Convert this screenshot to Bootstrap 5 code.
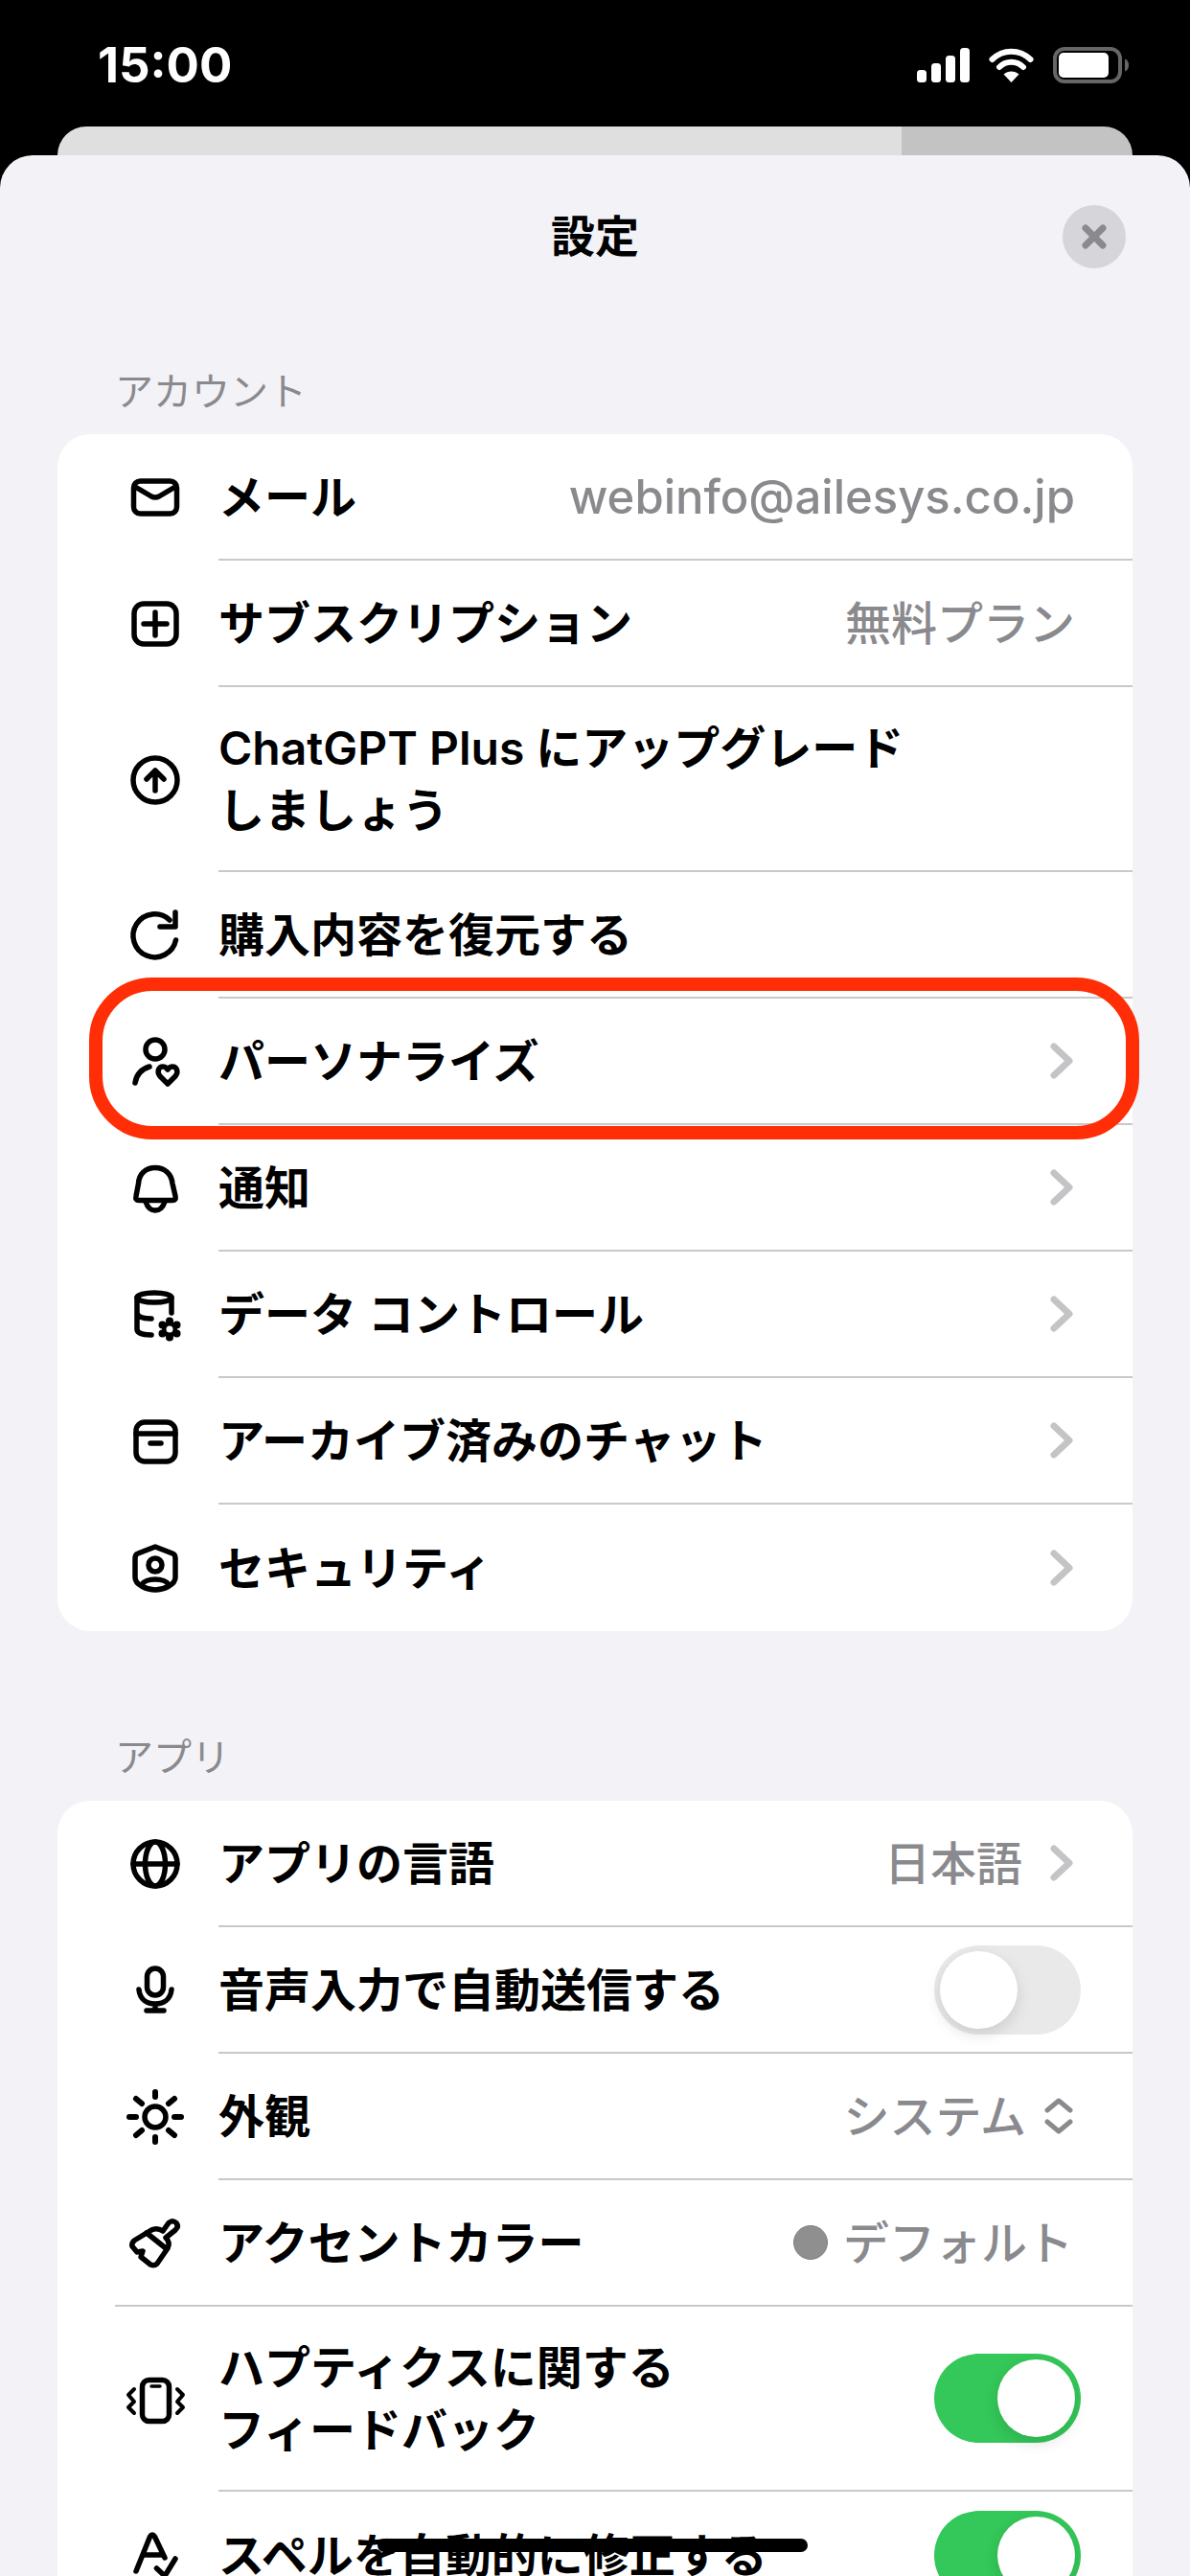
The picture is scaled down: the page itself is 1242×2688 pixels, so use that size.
<!DOCTYPE html>
<html lang="ja">
  <head>
    <meta charset="UTF-8" />
    <meta name="viewport" content="width=device-width, initial-scale=1.0" />
    <title>設定</title>
    <link
      href="https://cdn.jsdelivr.net/npm/bootstrap@5.3.2/dist/css/bootstrap.min.css"
      rel="stylesheet"
    />
    <style>
      html,
      body {
        height: 2688px;
        overflow: hidden;
      }
      body {
        background: #000;
        font-family: Inter, "Noto Sans CJK JP", sans-serif;
        color: #000;
      }
      .phone {
        width: 1242px;
        height: 2688px;
        overflow: hidden;
      }
      .status-bar {
        height: 132px;
        padding: 42px 64px 0 102px;
      }
      .clock {
        font-size: 51px;
        line-height: 52px;
        font-weight: 700;
        color: #fff;
      }
      .status-icons {
        gap: 20px;
        padding-top: 7px;
      }
      .back-sheet {
        height: 30px;
        margin: 0 60px 0 60px;
        border-radius: 30px 30px 0 0;
        overflow: hidden;
      }
      .back-left {
        width: 881px;
        background: #dfdfdf;
      }
      .back-right {
        background: #c3c3c3;
      }
      .sheet {
        height: 2526px;
        background: #f2f2f7;
        border-radius: 34px 34px 0 0;
        padding-top: 52px;
      }
      .sheet-head {
        height: 66px;
        padding: 0 67px;
      }
      .head-space {
        width: 66px;
      }
      .sheet-title {
        font-size: 46px;
        font-weight: 700;
        margin: 0;
        line-height: 60px;
        padding-bottom: 3px;
      }
      .close-btn {
        width: 66px;
        height: 66px;
        border-radius: 50%;
        background: #d5d5da;
      }
      .group-label {
        font-size: 40px;
        line-height: 48px;
        color: #8a8a8e;
        margin: 105px 0 20px 120px;
      }
      .group-label.second {
        margin-top: 108px;
        margin-bottom: 21px;
      }
      .set-group {
        --bs-list-group-border-radius: 34px;
        margin: 0 60px;
      }
      .set-item.list-group-item {
        padding: 0 0 0 60px;
        border: 0;
        height: 132px;
        background: #fff;
        color: #000;
      }
      .set-item.tall.list-group-item {
        height: 193px;
      }
      .set-icon {
        width: 84px;
        height: 84px;
        margin-right: 24px;
        flex-shrink: 0;
      }
      .set-icon svg {
        display: block;
        fill: none;
        stroke: #000;
        stroke-width: 5.5;
        stroke-linecap: round;
        stroke-linejoin: round;
      }
      .set-body {
        height: 100%;
        min-width: 0;
        padding-right: 62px;
        border-bottom: 2px solid #c9c9cb;
      }
      .set-item:last-child .set-body {
        border-bottom: 0;
      }
      /* this separator runs under the icon too */
      .set-item.wide-sep::after {
        content: "";
        position: absolute;
        left: 60px;
        right: 0;
        bottom: 0;
        height: 2px;
        background: #c9c9cb;
      }
      .set-text {
        font-size: 48px;
        line-height: 65px;
        font-weight: 600;
      }
      .set-val {
        font-size: 48px;
        line-height: 65px;
        font-weight: 500;
        color: #8a8a8e;
      }
      .val-email {
        font-size: 49px;
        margin-right: -2px;
      }
      .val-plan {
        margin-right: -2px;
      }
      .val-gap {
        gap: 16px;
      }
      .val-gap-sm {
        gap: 19px;
      }
      .val-gap-lg {
        gap: 29px;
      }
      .accent-dot {
        width: 36px;
        height: 36px;
        border-radius: 50%;
        background: #8f8f8f;
        border: 1px solid #7f7f7f;
      }
      .switch-track {
        width: 153px;
        height: 93px;
        border-radius: 47px;
        padding: 6px;
        margin-right: -8px;
      }
      .switch-track.off {
        background: #e9e9ea;
      }
      .switch-track.on {
        background: #34c759;
        padding-left: 66px;
      }
      .switch-knob {
        width: 81px;
        height: 81px;
        border-radius: 50%;
        background: #fff;
        box-shadow: 0 6px 16px rgba(0, 0, 0, 0.12);
      }
      .red-ring {
        position: absolute;
        left: 93px;
        top: 1020px;
        width: 1096px;
        height: 169px;
        border: 14px solid #ff2e06;
        border-radius: 66px;
      }
      .home-bar {
        position: absolute;
        left: 394px;
        top: 2649px;
        width: 449px;
        height: 14px;
        border-radius: 7px;
        background: #000;
      }
    </style>
  </head>
  <body>
    <div class="phone position-relative">
      <!-- status bar -->
      <div class="status-bar d-flex justify-content-between align-items-start">
        <div class="clock">15:00</div>
        <div class="status-icons d-flex align-items-center">
          <svg width="55" height="36" viewBox="0 0 55 36" fill="#fff">
            <rect x="0" y="23" width="10" height="13" rx="3.5" />
            <rect x="15" y="16" width="10" height="20" rx="3.5" />
            <rect x="30" y="8" width="10" height="28" rx="3.5" />
            <rect x="45" y="0" width="10" height="36" rx="3.5" />
          </svg>
          <svg width="47" height="36" viewBox="0 0 47 36">
            <path
              d="M3.5 12C15 1 32 1 43.5 12M11 20C18 13 29 13 36 20"
              fill="none"
              stroke="#fff"
              stroke-width="6"
              stroke-linecap="round"
            />
            <path d="M23.5 36L15.5 27.500C20 23.500 27 23.500 31.500 27.500Z" fill="#fff" />
          </svg>
          <svg width="79" height="38" viewBox="0 0 79 38">
            <rect x="2" y="2" width="68" height="34" rx="10" fill="none" stroke="#666" stroke-width="4" />
            <rect x="6" y="6" width="52" height="26" rx="5" fill="#fff" />
            <path d="M75 12.500C78 13.500 79 16 79 19C79 22 78 24.500 75 25.500Z" fill="#666" />
          </svg>
        </div>
      </div>

      <div class="back-sheet d-flex">
        <div class="back-left"></div>
        <div class="back-right flex-grow-1"></div>
      </div>

      <div class="sheet">
        <div class="sheet-head d-flex justify-content-between align-items-center">
          <div class="head-space"></div>
          <h1 class="sheet-title">設定</h1>
          <div class="close-btn d-flex align-items-center justify-content-center">
            <svg width="34" height="34" viewBox="0 0 34 34">
              <path d="M8 8L26 26M26 8L8 26" stroke="#8a8a8e" stroke-width="7" stroke-linecap="round" />
            </svg>
          </div>
        </div>

        <div class="group-label">アカウント</div>
        <div class="list-group set-group">
          <div class="list-group-item set-item d-flex align-items-center">
            <div class="set-icon">
              <svg width="84" height="84" viewBox="0 0 84 84">
                <rect x="19.500" y="25" width="45" height="34" rx="7" />
                <path d="M21 31L38 41Q42 43 46 41L63 31" />
              </svg>
            </div>
            <div class="set-body flex-grow-1 d-flex align-items-center justify-content-between">
              <span class="set-text">メール</span>
              <span class="set-val val-email">webinfo@ailesys.co.jp</span>
            </div>
          </div>
          <div class="list-group-item set-item d-flex align-items-center">
            <div class="set-icon">
              <svg width="84" height="84" viewBox="0 0 84 84">
                <rect x="20" y="21" width="44" height="42" rx="10" />
                <path d="M30 42H54M42 30V54" />
              </svg>
            </div>
            <div class="set-body flex-grow-1 d-flex align-items-center justify-content-between">
              <span class="set-text">サブスクリプション</span>
              <span class="set-val val-plan">無料プラン</span>
            </div>
          </div>
          <div class="list-group-item set-item tall d-flex align-items-center">
            <div class="set-icon">
              <svg width="84" height="84" viewBox="0 0 84 84">
                <circle cx="42" cy="42" r="23" />
                <path d="M42 53V32M33 41L42 32L51 41" />
              </svg>
            </div>
            <div class="set-body flex-grow-1 d-flex align-items-center">
              <span class="set-text">ChatGPT Plus にアップグレード<br />しましょう</span>
            </div>
          </div>
          <div class="list-group-item set-item d-flex align-items-center">
            <div class="set-icon">
              <svg width="84" height="84" viewBox="0 0 84 84">
                <path d="M63.500 47A22.500 22.500 0 1 1 57 26" />
                <path d="M63 18V33H47" />
              </svg>
            </div>
            <div class="set-body flex-grow-1 d-flex align-items-center">
              <span class="set-text">購入内容を復元する</span>
            </div>
          </div>
          <div class="list-group-item set-item d-flex align-items-center">
            <div class="set-icon">
              <svg width="84" height="84" viewBox="0 0 84 84">
                <circle cx="42" cy="29" r="10" />
                <path d="M21 64Q23 51 36 47" />
                <path d="M55 65L47 57C43 52 46 47 50 47C53 47 54 49 55 50C56 49 57 47 60 47C64 47 67 52 63 57Z" />
              </svg>
            </div>
            <div class="set-body flex-grow-1 d-flex align-items-center justify-content-between">
              <span class="set-text">パーソナライズ</span>
              <svg width="24" height="38" viewBox="0 0 24 38">
                <path d="M4 4L20 19L4 34" fill="none" stroke="#c4c4c6" stroke-width="7" stroke-linecap="round" stroke-linejoin="round" />
              </svg>
            </div>
          </div>
          <div class="list-group-item set-item d-flex align-items-center">
            <div class="set-icon">
              <svg width="84" height="84" viewBox="0 0 84 84">
                <path d="M42 20.500C32 20.500 25 27 24.500 37L22 50Q21 54.500 25 54.500H60Q64 54.500 63 50L60 37C59 27 52 20.500 42 20.500Z" />
                <path d="M32 56C34 62 37 65 42 65C47 65 50 62 52 56" />
              </svg>
            </div>
            <div class="set-body flex-grow-1 d-flex align-items-center justify-content-between">
              <span class="set-text">通知</span>
              <svg width="24" height="38" viewBox="0 0 24 38">
                <path d="M4 4L20 19L4 34" fill="none" stroke="#c4c4c6" stroke-width="7" stroke-linecap="round" stroke-linejoin="round" />
              </svg>
            </div>
          </div>
          <div class="list-group-item set-item d-flex align-items-center">
            <div class="set-icon">
              <svg width="84" height="84" viewBox="0 0 84 84">
                <ellipse cx="41" cy="24" rx="18" ry="5" />
                <path d="M23 24V57C23 62 32 63 38 63M23 40C24 45 32 46 38 46M59 24V40" />
                <g fill="#000" stroke="none">
                  <circle cx="57" cy="57" r="8" />
                  <circle cx="57" cy="48.500" r="4" />
                  <circle cx="57" cy="65.500" r="4" />
                  <circle cx="49.500" cy="52.500" r="4" />
                  <circle cx="64.500" cy="52.500" r="4" />
                  <circle cx="49.500" cy="61.500" r="4" />
                  <circle cx="64.500" cy="61.500" r="4" />
                  <circle cx="57" cy="57" r="3.500" fill="#fff" />
                </g>
              </svg>
            </div>
            <div class="set-body flex-grow-1 d-flex align-items-center justify-content-between">
              <span class="set-text">データ コントロール</span>
              <svg width="24" height="38" viewBox="0 0 24 38">
                <path d="M4 4L20 19L4 34" fill="none" stroke="#c4c4c6" stroke-width="7" stroke-linecap="round" stroke-linejoin="round" />
              </svg>
            </div>
          </div>
          <div class="list-group-item set-item d-flex align-items-center">
            <div class="set-icon">
              <svg width="84" height="84" viewBox="0 0 84 84">
                <rect x="22" y="22" width="41" height="41" rx="9" />
                <path d="M22 34H63M37 44H48" />
              </svg>
            </div>
            <div class="set-body flex-grow-1 d-flex align-items-center justify-content-between">
              <span class="set-text">アーカイブ済みのチャット</span>
              <svg width="24" height="38" viewBox="0 0 24 38">
                <path d="M4 4L20 19L4 34" fill="none" stroke="#c4c4c6" stroke-width="7" stroke-linecap="round" stroke-linejoin="round" />
              </svg>
            </div>
          </div>
          <div class="list-group-item set-item d-flex align-items-center">
            <div class="set-icon">
              <svg width="84" height="84" viewBox="0 0 84 84">
                <path d="M42 20L60 27Q63 28 63 32V52C63 60 50 65 42 65C34 65 21 60 21 52V32Q21 28 24 27Z" />
                <circle cx="42" cy="39" r="7" />
                <path d="M28 60C31 52 53 52 56 60" />
              </svg>
            </div>
            <div class="set-body flex-grow-1 d-flex align-items-center justify-content-between">
              <span class="set-text">セキュリティ</span>
              <svg width="24" height="38" viewBox="0 0 24 38">
                <path d="M4 4L20 19L4 34" fill="none" stroke="#c4c4c6" stroke-width="7" stroke-linecap="round" stroke-linejoin="round" />
              </svg>
            </div>
          </div>
        </div>

        <div class="group-label second">アプリ</div>
        <div class="list-group set-group">
          <div class="list-group-item set-item d-flex align-items-center">
            <div class="set-icon">
              <svg width="84" height="84" viewBox="0 0 84 84">
                <circle cx="42" cy="42" r="23" />
                <ellipse cx="42" cy="42" rx="10.500" ry="23" />
                <path d="M19 42H65" />
              </svg>
            </div>
            <div class="set-body flex-grow-1 d-flex align-items-center justify-content-between">
              <span class="set-text">アプリの言語</span>
              <span class="d-flex align-items-center val-gap-lg">
                <span class="set-val">日本語</span>
                <svg width="24" height="38" viewBox="0 0 24 38">
                  <path d="M4 4L20 19L4 34" fill="none" stroke="#c4c4c6" stroke-width="7" stroke-linecap="round" stroke-linejoin="round" />
                </svg>
              </span>
            </div>
          </div>
          <div class="list-group-item set-item d-flex align-items-center">
            <div class="set-icon">
              <svg width="84" height="84" viewBox="0 0 84 84">
                <rect x="33.500" y="19" width="17" height="28" rx="8.500" />
                <path d="M25 41C26 52 34 56 42 56C50 56 58 52 59 41M42 56V62M33 63H51" />
              </svg>
            </div>
            <div class="set-body flex-grow-1 d-flex align-items-center justify-content-between">
              <span class="set-text">音声入力で自動送信する</span>
              <div class="switch-track off"><div class="switch-knob"></div></div>
            </div>
          </div>
          <div class="list-group-item set-item d-flex align-items-center">
            <div class="set-icon">
              <svg width="84" height="84" viewBox="0 0 84 84">
                <circle cx="42" cy="42" r="11" />
                <path stroke-width="6" d="M42 16V21M42 63V68M15 42H22M62 42H69M22 23L28 28M62 23L56 28M22 61L28 56M62 61L56 56" />
              </svg>
            </div>
            <div class="set-body flex-grow-1 d-flex align-items-center justify-content-between">
              <span class="set-text">外観</span>
              <span class="d-flex align-items-center val-gap-sm">
                <span class="set-val">システム</span>
                <svg width="30" height="40" viewBox="0 0 30 40">
                  <path d="M3 14L15 4L27 14M3 26L15 36L27 26" fill="none" stroke="#8a8a8e" stroke-width="5" stroke-linecap="round" stroke-linejoin="round" />
                </svg>
              </span>
            </div>
          </div>
          <div class="list-group-item set-item wide-sep d-flex align-items-center">
            <div class="set-icon">
              <svg width="84" height="84" viewBox="0 0 84 84">
                <path d="M50 29L56 20.500Q60 17 64 20.500Q67 24.500 63 28L53 36Q58 41 55 47L44 63Q41 66 37 64L27 56L29 50L23 51L18 45Q17 42 20 39L38 28Q44 25 50 29Z" />
                <path d="M33 31L53 47" />
              </svg>
            </div>
            <div class="set-body flex-grow-1 d-flex align-items-center justify-content-between">
              <span class="set-text">アクセントカラー</span>
              <span class="d-flex align-items-center val-gap">
                <span class="accent-dot"></span>
                <span class="set-val">デフォルト</span>
              </span>
            </div>
          </div>
          <div class="list-group-item set-item tall d-flex align-items-center">
            <div class="set-icon">
              <svg width="84" height="84" viewBox="0 0 84 84">
                <rect x="28.500" y="21.500" width="28" height="43" rx="7" />
                <path stroke-width="3.500" d="M38 28H47" />
                <path stroke-width="4" d="M20 31L14 37L20 44L14 50L20 56M65 31L71 37L65 44L71 50L65 56" />
              </svg>
            </div>
            <div class="set-body flex-grow-1 d-flex align-items-center justify-content-between">
              <span class="set-text">ハプティクスに関する<br />フィードバック</span>
              <div class="switch-track on"><div class="switch-knob"></div></div>
            </div>
          </div>
          <div class="list-group-item set-item d-flex align-items-center">
            <div class="set-icon">
              <svg width="84" height="84" viewBox="0 0 84 84">
                <path d="M22 59L36.500 23Q39 19 41.500 23L52 45M30 42H50" />
                <path d="M43.500 56L52 64L63 46" />
              </svg>
            </div>
            <div class="set-body flex-grow-1 d-flex align-items-center justify-content-between">
              <span class="set-text">スペルを自動的に修正する</span>
              <div class="switch-track on"><div class="switch-knob"></div></div>
            </div>
          </div>
        </div>
      </div>

      <!-- annotation drawn over the screenshot -->
      <div class="red-ring"></div>
      <div class="home-bar"></div>
    </div>

    <script src="https://cdn.jsdelivr.net/npm/bootstrap@5.3.2/dist/js/bootstrap.bundle.min.js"></script>
  </body>
</html>
